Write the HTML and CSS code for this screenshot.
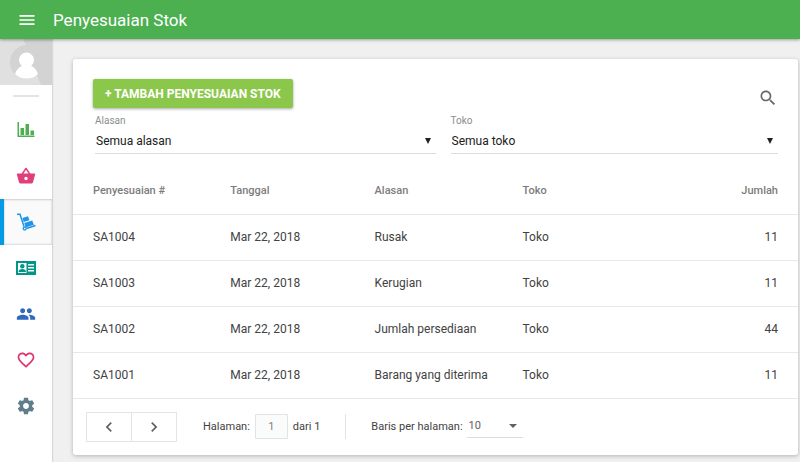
FILE: index.html
```html
<!DOCTYPE html>
<html lang="id">
<head>
<meta charset="utf-8">
<meta name="viewport" content="width=device-width, initial-scale=1">
<title>Penyesuaian Stok</title>
<link rel="stylesheet" href="styles.css">
</head>
<body>
<header class="topbar">
  <button class="menu" type="button" aria-label="Menu"><svg width="20" height="20" viewBox="0 0 24 24"><path d="M3 18h18v-2H3v2zm0-5h18v-2H3v2zm0-7v2h18V6H3z"/></svg></button>
  <h1>Penyesuaian Stok</h1>
</header>
<div class="shell">
  <nav class="sidebar">
    <a class="avatar" href="#" aria-label="Profil"><svg viewBox="0 0 52 46" preserveAspectRatio="xMidYMid slice">
      <path fill="#e0e0e0" d="M0 0h52v46H0z"/>
      <path fill="#d3d3d3" d="M23 0h29v46H41L36 34 19 38A17 17 0 0 1 26 6z"/>
      <circle cx="26.5" cy="21" r="7.5" fill="#fff"/>
      <path fill="#fff" d="M15 35c1-4 4-7 7-8h9c3 1 6 4 7 8-3 3-7 4.500-11.500 4.500S18 38 15 35z"/>
    </svg></a>
    <hr>
    <a class="item sales" href="#" aria-label="Laporan"><svg width="20" height="20" viewBox="0 0 20 20"><path d="M1.500 2h1.500v13.500H18.500V17h-17zM4.500 8H8v7H4.500zm5-4H13v11H9.500zm5 6.500h3.500V15h-3.500z"/></svg></a>
    <a class="item items" href="#" aria-label="Barang"><svg width="20" height="20" viewBox="0 0 24 24"><path d="M17.210 9l-4.380-6.560c-.19-.28-.51-.42-.83-.42-.32 0-.64.14-.83.430L6.790 9H2c-.55 0-1 .45-1 1 0 .09.010.18.040.270l2.540 9.270c.23.840 1 1.460 1.920 1.460h13c.92 0 1.690-.62 1.930-1.460l2.540-9.270L23 10c0-.55-.45-1-1-1h-4.790zM9 9l3-4.400L15 9H9zm3 8c-1.100 0-2-.9-2-2s.9-2 2-2 2 .9 2 2-.9 2-2 2z"/></svg></a>
    <a class="item stock active" href="#" aria-label="Stok" aria-current="page"><svg width="20" height="20" viewBox="0 0 20 20"><path fill="none" stroke="currentColor" stroke-width="1.500" d="M1 2.200h3L8 14.500M10.500 16.500l9-3"/><circle cx="8.700" cy="16.500" r="1.500" fill="none" stroke="currentColor" stroke-width="1.300"/><path d="M6.400 6.100l5.700-1.800 1.300 3.900-5.700 1.800zM8.200 11l8-2.500 1.700 4.300-8.100 2.800z"/></svg></a>
    <a class="item staff" href="#" aria-label="Karyawan"><svg width="20" height="20" viewBox="0 0 20 20"><path fill-rule="evenodd" d="M0 3h20v14H0zM2 5v10h8.500V5zm10 1v1.500h6V6zm0 3v1.500h6V9zm0 3v1.500h6V12z"/><circle cx="6.300" cy="8.300" r="2.200"/><path d="M2.500 14c0-2 1.500-3 3.800-3s3.700 1 3.700 3z"/></svg></a>
    <a class="item customers" href="#" aria-label="Pelanggan"><svg width="20" height="20" viewBox="0 0 24 24"><path d="M16 11c1.660 0 2.990-1.340 2.990-3S17.660 5 16 5s-3 1.340-3 3 1.340 3 3 3zm-8 0c1.660 0 2.990-1.340 2.990-3S9.660 5 8 5 5 6.340 5 8s1.340 3 3 3zm0 2c-2.330 0-7 1.170-7 3.500V19h14v-2.500c0-2.330-4.670-3.500-7-3.500zm8 0c-.29 0-.62.020-.97.050 1.160.84 1.970 1.970 1.970 3.450V19h6v-2.500c0-2.330-4.670-3.500-7-3.500z"/></svg></a>
    <a class="item loyalty" href="#" aria-label="Loyalitas"><svg width="20" height="20" viewBox="0 0 24 24"><path d="M16.500 3c-1.740 0-3.410.81-4.500 2.090C10.910 3.810 9.240 3 7.500 3 4.420 3 2 5.420 2 8.500c0 3.780 3.400 6.860 8.550 11.540L12 21.350l1.450-1.320C18.600 15.360 22 12.280 22 8.500 22 5.420 19.580 3 16.500 3zm-4.400 15.550l-.1.100-.1-.1C7.140 14.240 4 11.390 4 8.500 4 6.500 5.500 5 7.500 5c1.540 0 3.040.99 3.570 2.360h1.870C13.460 5.990 14.960 5 16.500 5c2 0 3.500 1.500 3.500 3.500 0 2.890-3.140 5.740-7.900 10.050z"/></svg></a>
    <a class="item settings" href="#" aria-label="Pengaturan"><svg width="20" height="20" viewBox="0 0 24 24"><path d="M19.430 12.980c.04-.32.070-.64.070-.98s-.03-.66-.07-.98l2.110-1.650c.19-.15.240-.42.120-.64l-2-3.460c-.12-.22-.39-.3-.61-.22l-2.490 1c-.52-.4-1.080-.73-1.690-.98l-.38-2.650C14.460 2.180 14.250 2 14 2h-4c-.25 0-.46.18-.49.420l-.38 2.650c-.61.250-1.170.590-1.690.98l-2.490-1c-.23-.09-.49 0-.61.220l-2 3.460c-.13.220-.07.490.12.640l2.110 1.650c-.04.320-.07.650-.07.980s.03.660.07.980l-2.110 1.650c-.19.150-.24.420-.12.640l2 3.460c.12.220.39.300.61.220l2.490-1c.52.400 1.080.730 1.690.980l.38 2.650c.03.240.24.420.49.420h4c.25 0 .46-.18.490-.42l.38-2.650c.61-.25 1.170-.59 1.690-.98l2.490 1c.23.090.49 0 .61-.22l2-3.460c.12-.22.070-.49-.12-.64l-2.110-1.650zM12 15.500c-1.930 0-3.500-1.570-3.500-3.500s1.570-3.500 3.500-3.500 3.500 1.570 3.500 3.500-1.570 3.500-3.500 3.500z"/></svg></a>
  </nav>
  <main>
    <section class="card">
      <div class="toolbar">
        <button class="add" type="button">+ TAMBAH PENYESUAIAN STOK</button>
        <button class="search" type="button" aria-label="Cari"><svg width="20" height="20" viewBox="0 0 24 24"><path d="M15.500 14h-.79l-.28-.27C15.410 12.590 16 11.110 16 9.500 16 5.910 13.090 3 9.500 3S3 5.910 3 9.500 5.910 16 9.500 16c1.610 0 3.090-.59 4.230-1.570l.27.280v.79l5 4.990L20.490 19l-4.990-5zm-6 0C7.010 14 5 11.990 5 9.500S7.010 5 9.500 5 14 7.010 14 9.500 11.990 14 9.500 14z"/></svg></button>
      </div>
      <div class="filters">
        <div class="field">
          <label for="reason">Alasan</label>
          <div class="select"><select id="reason"><option>Semua alasan</option></select><svg width="6" height="6" viewBox="0 0 6 6"><path d="M0 0h6L3 6z"/></svg></div>
        </div>
        <div class="field">
          <label for="store">Toko</label>
          <div class="select"><select id="store"><option>Semua toko</option></select><svg width="6" height="6" viewBox="0 0 6 6"><path d="M0 0h6L3 6z"/></svg></div>
        </div>
      </div>
      <table>
        <colgroup><col class="c-id"><col class="c-date"><col class="c-reason"><col class="c-store"><col></colgroup>
        <thead><tr><th>Penyesuaian #</th><th>Tanggal</th><th>Alasan</th><th>Toko</th><th>Jumlah</th></tr></thead>
        <tbody>
          <tr><td>SA1004</td><td>Mar 22, 2018</td><td>Rusak</td><td>Toko</td><td>11</td></tr>
          <tr><td>SA1003</td><td>Mar 22, 2018</td><td>Kerugian</td><td>Toko</td><td>11</td></tr>
          <tr><td>SA1002</td><td>Mar 22, 2018</td><td>Jumlah persediaan</td><td>Toko</td><td>44</td></tr>
          <tr><td>SA1001</td><td>Mar 22, 2018</td><td>Barang yang diterima</td><td>Toko</td><td>11</td></tr>
        </tbody>
      </table>
      <footer class="pager">
        <div class="steps">
          <button type="button" aria-label="Sebelumnya"><svg width="20" height="20" viewBox="0 0 24 24"><path d="M15.410 7.410L14 6l-6 6 6 6 1.410-1.410L10.830 12z"/></svg></button>
          <button type="button" aria-label="Berikutnya"><svg width="20" height="20" viewBox="0 0 24 24"><path d="M10 6L8.590 7.410 13.170 12l-4.580 4.590L10 18l6-6z"/></svg></button>
        </div>
        <div class="page"><label for="page">Halaman:</label><input id="page" type="text" value="1"><span>dari 1</span></div>
        <div class="rows"><label for="rows">Baris per halaman:</label>
          <div class="select"><select id="rows"><option>10</option></select><svg width="8" height="4" viewBox="0 0 8 4"><path d="M0 0h8L4 4z"/></svg></div>
        </div>
      </footer>
    </section>
  </main>
</div>
</body>
</html>
```
FILE: styles.css
```css
* { box-sizing: border-box; }

body {
  margin: 0;
  min-height: 100vh;
  display: flex;
  flex-direction: column;
  background: #f0f0f0;
  color: #424242;
  font: 12px/16px Roboto, "Liberation Sans", sans-serif;
}

svg { display: block; fill: currentColor; }

button, input, select {
  margin: 0;
  padding: 0;
  border: 0;
  background: none;
  color: inherit;
  font: inherit;
}

button { display: flex; align-items: center; justify-content: center; }

.topbar {
  position: relative;
  z-index: 1;
  display: flex;
  align-items: center;
  height: 39px;
  background: #4caf50;
  color: #fff;
  box-shadow: 0 1px 3px rgba(0, 0, 0, .35);
}

.menu { width: 53px; height: 39px; }

h1 { margin: 0; font-size: 17px; line-height: 24px; font-weight: 400; }

.shell { flex: 1; display: flex; }

.sidebar {
  flex: none;
  width: 52px;
  background: #fff;
  box-shadow: 1px 0 1px rgba(0, 0, 0, .1);
}

.avatar svg { width: 100%; height: 46px; }

.sidebar hr { height: 2px; margin: 10px 13px; border: 0; background: #e4e4e4; }

.item {
  display: flex;
  align-items: center;
  justify-content: center;
  height: 46px;
}

.item.active {
  padding-right: 4px;
  border-left: 4px solid #039be5;
  background: #fafafa;
  box-shadow: inset 0 1px 2px rgba(0, 0, 0, .18), inset 0 -1px 2px rgba(0, 0, 0, .12);
}

.sales { color: #4caf50; }
.items { color: #e0407a; }
.stock { color: #2196e8; }
.staff { color: #009688; }
.customers { color: #3069be; }
.loyalty { color: #e0336e; }
.settings { color: #607d8b; }

main { flex: 1; min-width: 0; padding: 20px 2px 7px 21px; }

.card {
  border-radius: 3px;
  background: #fff;
  box-shadow: 0 1px 4px rgba(0, 0, 0, .26);
}

.toolbar {
  display: flex;
  justify-content: space-between;
  padding: 20px 20px 0;
}

.add {
  height: 29px;
  padding: 0 12px;
  border-radius: 2px;
  background: #8bc74a;
  color: #fff;
  font-weight: 700;
  box-shadow: 0 1px 3px rgba(0, 0, 0, .35);
}

.search { align-self: flex-end; color: #686868; }

.filters {
  display: grid;
  grid-template-columns: 26fr 25fr;
  gap: 15px;
  padding: 5px 20px 14px 22px;
}

.field label { display: block; color: #8c8c8c; font-size: 10px; line-height: 16px; }

.select { display: flex; align-items: center; border-bottom: 1px solid #dcdcdc; }

.select select {
  flex: 1;
  min-width: 0;
  appearance: none;
  outline: 0;
}

.select svg { flex: none; pointer-events: none; }

.field .select { height: 25px; padding: 0 5px 0 1px; color: #212121; }

table { width: 100%; table-layout: fixed; border-collapse: collapse; }

.c-id { width: 21.7%; }
.c-date { width: 19.9%; }
.c-reason { width: 20.4%; }
.c-store { width: 19%; }

th, td { height: 46px; padding: 0; border-bottom: 1px solid #e8e8e8; text-align: left; }

th { color: #7c7c7c; font-size: 11px; font-weight: 500; }

th:first-child, td:first-child { padding-left: 20px; }

th:last-child, td:last-child { padding-right: 20px; text-align: right; }

.pager { display: flex; align-items: center; padding: 13px; font-size: 11px; }

.steps { display: flex; border: 1px solid #e4e4e4; color: #616161; }

.steps button { width: 44px; height: 28px; }

.steps button + button { width: 45px; border-left: 1px solid #e4e4e4; }

.page {
  display: flex;
  align-items: center;
  gap: 5px;
  margin-left: 26px;
  padding-right: 25px;
  border-right: 1px solid #e4e4e4;
}

.page input {
  width: 33px;
  height: 25px;
  border: 1px solid #e0e4e4;
  border-radius: 1px;
  background: #fafcfc;
  color: #808080;
  text-align: center;
}

.rows { display: flex; align-items: center; gap: 4px; margin-left: 25px; }

.rows .select { width: 56px; height: 22px; padding: 0 6px 0 2px; color: #616161; }
```
